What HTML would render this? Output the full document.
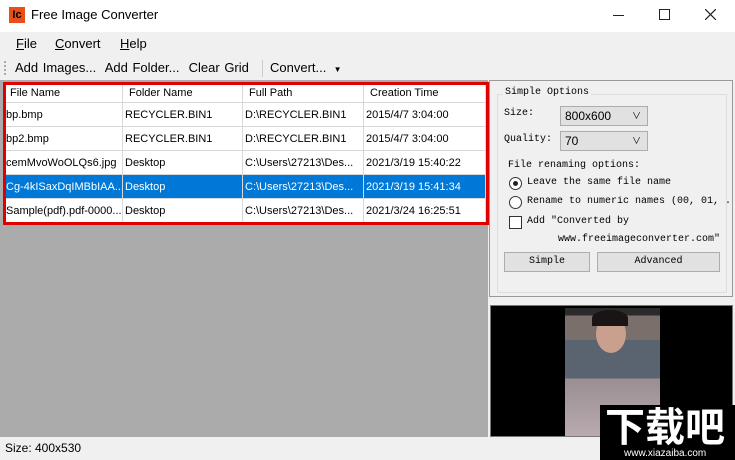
<!DOCTYPE html>
<html><head><meta charset="utf-8"><style>
body{margin:0;width:735px;height:460px;position:relative;overflow:hidden;background:#f0f0f0;font-family:"Liberation Sans","Noto Sans CJK SC",sans-serif;font-size:12px;color:#000}
.a{position:absolute}
.mono{font-family:"Liberation Mono","Noto Sans CJK SC",monospace;font-size:10px;white-space:nowrap}
.cell{position:absolute;height:24px;line-height:24px;white-space:nowrap;overflow:hidden;padding-left:2px;box-sizing:border-box;border-right:1px solid #d8d8d8;border-bottom:1px solid #d8d8d8;font-size:11px}
</style></head><body>
<div class="a" style="left:0;top:0;width:735px;height:32px;background:#fff"></div>
<div class="a" style="left:9px;top:7px;width:16px;height:16px;background:#e8501a;color:#000;font-weight:bold;font-size:11px;line-height:16px;text-align:center">Ic</div>
<div class="a" style="left:31px;top:7px;font-size:13px">Free Image Converter</div>
<div class="a" style="left:613px;top:15px;width:11px;height:1px;background:#222"></div>
<div class="a" style="left:659px;top:9px;width:9px;height:9px;border:1px solid #222"></div>
<svg class="a" style="left:705px;top:9px" width="11" height="11"><path d="M0 0L11 11M11 0L0 11" stroke="#222" stroke-width="1.2"/></svg>
<div class="a" style="left:0;top:32px;width:445px;height:24px;background:#f0f0f0"></div>
<div class="a" style="left:16px;top:36px;font-size:13px"><u>F</u>ile</div>
<div class="a" style="left:55px;top:36px;font-size:13px"><u>C</u>onvert</div>
<div class="a" style="left:120px;top:36px;font-size:13px"><u>H</u>elp</div>
<div class="a" style="left:4px;top:61px;width:2px;height:14px;border-left:2px dotted #aaa"></div>
<div class="a" style="left:15px;top:60px;font-size:13px;word-spacing:1px">Add Images...&nbsp; Add Folder...&nbsp; Clear Grid</div>
<div class="a" style="left:262px;top:60px;width:1px;height:17px;background:#ccc"></div>
<div class="a" style="left:270px;top:60px;font-size:13px">Convert... &nbsp;<span style="font-size:8px">▼</span></div>
<div class="a" style="left:0;top:80px;width:488px;height:357px;background:#ababab"></div>
<div class="a" style="left:4px;top:83px;width:482px;height:140px;background:#fff"></div>
<div style="position:absolute;left:4px;top:83px">
<div class="cell" style="left:0;top:0;width:119px;height:20px;line-height:20px;padding-left:6px">File Name</div>
<div class="cell" style="left:119px;top:0;width:120px;height:20px;line-height:20px;padding-left:6px">Folder Name</div>
<div class="cell" style="left:239px;top:0;width:121px;height:20px;line-height:20px;padding-left:6px">Full Path</div>
<div class="cell" style="left:360px;top:0;width:122px;height:20px;line-height:20px;padding-left:6px">Creation Time</div>
<div class="cell" style="left:0;top:20px;width:119px">bp.bmp</div><div class="cell" style="left:119px;top:20px;width:120px">RECYCLER.BIN1</div><div class="cell" style="left:239px;top:20px;width:121px">D:\RECYCLER.BIN1</div><div class="cell" style="left:360px;top:20px;width:122px">2015/4/7 3:04:00</div>
<div class="cell" style="left:0;top:44px;width:119px">bp2.bmp</div><div class="cell" style="left:119px;top:44px;width:120px">RECYCLER.BIN1</div><div class="cell" style="left:239px;top:44px;width:121px">D:\RECYCLER.BIN1</div><div class="cell" style="left:360px;top:44px;width:122px">2015/4/7 3:04:00</div>
<div class="cell" style="left:0;top:68px;width:119px">cemMvoWoOLQs6.jpg</div><div class="cell" style="left:119px;top:68px;width:120px">Desktop</div><div class="cell" style="left:239px;top:68px;width:121px">C:\Users\27213\Des...</div><div class="cell" style="left:360px;top:68px;width:122px">2021/3/19 15:40:22</div>
<div class="a" style="left:0;top:92px;width:482px;height:24px;background:#0078d7"></div>
<div class="cell" style="left:0;top:92px;width:119px;color:#fff">Cg-4kISaxDqIMBbIAA...</div><div class="cell" style="left:119px;top:92px;width:120px;color:#fff">Desktop</div><div class="cell" style="left:239px;top:92px;width:121px;color:#fff">C:\Users\27213\Des...</div><div class="cell" style="left:360px;top:92px;width:122px;color:#fff">2021/3/19 15:41:34</div>
<div class="cell" style="left:0;top:116px;width:119px">Sample(pdf).pdf-0000...</div><div class="cell" style="left:119px;top:116px;width:120px">Desktop</div><div class="cell" style="left:239px;top:116px;width:121px">C:\Users\27213\Des...</div><div class="cell" style="left:360px;top:116px;width:122px">2021/3/24 16:25:51</div>
</div>
<div class="a" style="left:3px;top:82px;width:480px;height:137px;border:3px solid #e00000"></div>
<div class="a" style="left:489px;top:80px;width:244px;height:217px;border:1px solid #999;box-sizing:border-box"></div>
<div class="a" style="left:497px;top:94px;width:230px;height:199px;border:1px solid #ddd;box-sizing:border-box"></div>
<div class="a mono" style="left:503px;top:87px;background:#f0f0f0;padding:0 2px">Simple Options</div>
<div class="a mono" style="left:504px;top:108px">Size:</div>
<div class="a" style="left:560px;top:106px;width:88px;height:20px;background:#e1e1e1;border:1px solid #adadad;box-sizing:border-box;padding-left:4px;line-height:18px">800x600<span style="position:absolute;right:6px;font-size:9px">∨</span></div>
<div class="a mono" style="left:504px;top:134px">Quality:</div>
<div class="a" style="left:560px;top:131px;width:88px;height:20px;background:#e1e1e1;border:1px solid #adadad;box-sizing:border-box;padding-left:4px;line-height:18px">70<span style="position:absolute;right:6px;font-size:9px">∨</span></div>
<div class="a mono" style="left:508px;top:160px">File renaming options:</div>
<div class="a" style="left:509px;top:177px;width:11px;height:11px;border:1px solid #333;border-radius:50%;background:#fff"><div style="position:absolute;left:3px;top:3px;width:5px;height:5px;border-radius:50%;background:#222"></div></div>
<div class="a mono" style="left:527px;top:177px">Leave the same file name</div>
<div class="a" style="left:509px;top:196px;width:11px;height:11px;border:1px solid #333;border-radius:50%;background:#fff"></div>
<div class="a mono" style="left:527px;top:196px;width:203px;overflow:hidden">Rename to numeric names (00, 01, .</div>
<div class="a" style="left:509px;top:216px;width:11px;height:11px;border:1px solid #333;background:#fff"></div>
<div class="a mono" style="left:527px;top:216px">Add "Converted by</div>
<div class="a mono" style="left:558px;top:234px">www.freeimageconverter.com"</div>
<div class="a mono" style="left:504px;top:252px;width:84px;height:18px;background:#e1e1e1;border:1px solid #adadad;text-align:center;line-height:17px">Simple</div>
<div class="a mono" style="left:597px;top:252px;width:121px;height:18px;background:#e1e1e1;border:1px solid #adadad;text-align:center;line-height:17px">Advanced</div>
<div class="a" style="left:490px;top:305px;width:243px;height:132px;background:#000;border:1px solid #777;box-sizing:border-box"></div>
<div class="a" style="left:565px;top:308px;width:95px;height:128px;background:linear-gradient(180deg,#2b2b2b 0 6%,#7a6f6a 6% 25%,#5a6470 25% 55%,#9a8e92 55%,#b8aab0 100%)"></div>
<div class="a" style="left:596px;top:315px;width:30px;height:38px;border-radius:50%;background:#c9a08e"></div>
<div class="a" style="left:592px;top:310px;width:36px;height:16px;border-radius:50% 50% 0 0;background:#1a1414"></div>
<div class="a" style="left:600px;top:405px;width:135px;height:55px;background:#000;overflow:hidden"></div>
<div class="a" style="left:605px;top:401px;color:#fff;font-size:40px;font-weight:bold;font-family:'Noto Sans CJK SC',sans-serif;line-height:46px;white-space:nowrap;width:130px;overflow:hidden;height:48px">下载吧</div>
<div class="a" style="left:624px;top:448px;color:#fff;font-size:10px">www.xiazaiba.com</div>
<div class="a" style="left:5px;top:441px;font-size:12px">Size: 400x530</div>
</body></html>
